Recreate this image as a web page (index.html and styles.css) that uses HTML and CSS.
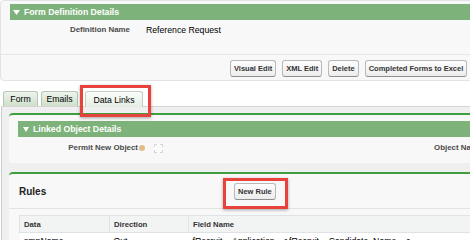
FILE: index.html
```html
<!DOCTYPE html>
<html>
<head>
<meta charset="utf-8">
<link rel="stylesheet" href="styles.css">
</head>
<body>
<div class="page">
  <section class="panel">
    <div class="sec-head head-top"><svg class="tri" width="7" height="5" viewBox="0 0 7 5"><polygon points="0,0 7,0 3.5,5" fill="#fff"/></svg>Form Definition Details</div>
    <div class="detail-row"><span class="label dl">Definition Name</span><span class="value">Reference Request</span></div>
    <div class="btn-row">
      <button class="btn">Visual Edit</button>
      <button class="btn">XML Edit</button>
      <button class="btn">Delete</button>
      <button class="btn">Completed Forms to Excel</button>
    </div>
  </section>

  <nav class="tabs">
    <span class="tab t-form">Form</span>
    <span class="tab t-emails">Emails</span>
    <span class="tab t-links active">Data Links</span>
  </nav>

  <div class="tab-body">
    <section class="block linked">
      <div class="sec-head head-linked"><svg class="tri" width="6" height="5" viewBox="0 0 6 5"><polygon points="0,0 6,0 3,5" fill="#fff"/></svg>Linked Object Details</div>
      <div class="field-row">
        <span class="label pl">Permit New Object</span>
        <span class="help"></span>
        <span class="check"></span>
        <span class="label ol">Object Name</span>
      </div>
    </section>
    <section class="block rules">
      <div class="rules-head">
        <h2 class="rules-title">Rules</h2>
        <button class="btn">New Rule</button>
      </div>
      <table class="grid">
        <thead>
          <tr><th class="c1">Data</th><th class="c2">Direction</th><th class="c3">Field Name</th></tr>
        </thead>
        <tbody>
          <tr><td>ompName</td><td>Out</td><td>fRecruit__Application__r.fRecruit__Candidate_Name__c</td></tr>
        </tbody>
      </table>
    </section>
  </div>

  <div class="callout callout-tab"></div>
  <div class="callout callout-btn"></div>
</div>
</body>
</html>
```

FILE: styles.css
```css
html, body {
  margin: 0;
  padding: 0;
  overflow: hidden;
  background: #fff;
}
body {
  font-family: "Liberation Sans", Arial, sans-serif;
  color: #000;
}
.page {
  position: relative;
  width: 620px;
  height: 240px;
}

/* top panel */
.panel {
  background: #f8f8f8;
  border: 1px solid #e3e3e3;
  border-radius: 4px;
  padding-top: 3px;
}
.sec-head {
  display: flex;
  align-items: center;
  height: 16px;
  background: #7db37b;
  color: #fff;
  font-weight: bold;
  font-size: 8.7px;
}
.head-top {
  margin-left: 9px;
  padding-left: 3px;
}
.head-top .tri { margin-right: 4px; }
.detail-row {
  display: flex;
  align-items: center;
  height: 12px;
  padding: 4px 0 18px;
  line-height: 12px;
}
.label {
  font-weight: bold;
  font-size: 7.9px;
  color: #4a4a4a;
  text-align: right;
}
.dl { width: 129px; }
.value {
  margin-left: 16px;
  font-size: 8.7px;
  color: #000;
}
.btn-row {
  display: flex;
  gap: 6px;
  border-top: 1px solid #e6e6e6;
  padding: 5px 0 3px 229px;
}
.btn {
  height: 17px;
  padding: 0 3px;
  font-family: "Liberation Sans", Arial, sans-serif;
  font-weight: bold;
  font-size: 7.5px;
  color: #333;
  background: linear-gradient(#fdfdfd, #ededed);
  border: 1px solid #b9b9b9;
  border-bottom-color: #8f8f8f;
  border-radius: 3px;
  white-space: nowrap;
}

/* tabs */
.tabs {
  display: flex;
  margin-top: 10px;
  padding-left: 3px;
  height: 15px;
  position: relative;
  z-index: 1;
}
.tab {
  box-sizing: border-box;
  height: 15px;
  display: flex;
  align-items: center;
  justify-content: center;
  font-size: 8.7px;
  color: #000;
  background: linear-gradient(#eef4ec, #cfe0cb);
  border: 1px solid #b8c4b6;
  border-bottom: none;
  border-radius: 3px 3px 0 0;
}
.t-form { width: 35px; margin-right: 3px; }
.t-emails { width: 37px; margin-right: 7px; }
.t-links { width: 58px; }
.tab.active {
  height: 16px;
  background: linear-gradient(#fbfdfb, #e3eee1);
  border-color: #c3cdc1;
}

/* tab body */
.tab-body {
  margin-left: 1px;
  background: #efefef;
  border-top: 1px solid #d5d5d5;
  border-left: 1px solid #cfcfcf;
  padding: 6px 0 0 7px;
  height: 200px;
}
.block {
  background: #f8f8f8;
  border-top: 2px solid #3f9e3f;
  border-radius: 4px 0 0 4px;
}
.linked {
  padding-top: 6px;
  margin-bottom: 9px;
}
.head-linked {
  margin-left: 9px;
  padding-left: 5px;
}
.head-linked .tri { margin-right: 4px; }
.field-row {
  display: flex;
  align-items: center;
  height: 12px;
  line-height: 12px;
  padding: 5px 0 9px;
}
.pl { width: 129px; }
.help {
  width: 6px;
  height: 6px;
  margin-left: 1px;
  border-radius: 50%;
  background: #e3bd88;
}
.check {
  box-sizing: border-box;
  width: 9px;
  height: 9px;
  margin-left: 9px;
  border: 1px dashed #d3d3d3;
  border-radius: 1px;
  background: #fbfbfb;
}
.ol {
  margin-left: 271px;
  white-space: nowrap;
}

/* rules */
.rules {
  height: 80px;
}
.rules-head {
  display: flex;
  align-items: center;
  height: 34px;
  padding-left: 10px;
  border-bottom: 1px solid #e2e2e2;
}
.rules-title {
  width: 215px;
  margin: 0;
  font-size: 10px;
  font-weight: bold;
  color: #222;
}
.grid {
  margin: 6px 0 0 10px;
  border-collapse: collapse;
  font-size: 8.7px;
}
.grid th {
  box-sizing: border-box;
  height: 17px;
  padding: 0 4px;
  text-align: left;
  font-weight: bold;
  font-size: 7.7px;
  color: #333;
  background: #f2f3f3;
  border: 1px solid #e0e3e5;
}
.c1 { width: 90px; }
.c2 { width: 79px; }
.c3 { width: 320px; }
.grid td {
  padding: 2px 4px;
  line-height: 12px;
  background: #fff;
  white-space: nowrap;
  color: #000;
}

/* annotation callouts */
.callout {
  position: absolute;
  box-sizing: border-box;
  border: 3px solid #e8423d;
  box-shadow: 0 1px 3px rgba(0,0,0,0.35);
  z-index: 5;
}
.callout-tab {
  left: 80px;
  top: 85px;
  width: 71px;
  height: 32px;
}
.callout-btn {
  left: 223px;
  top: 178px;
  width: 65px;
  height: 31px;
}
```
